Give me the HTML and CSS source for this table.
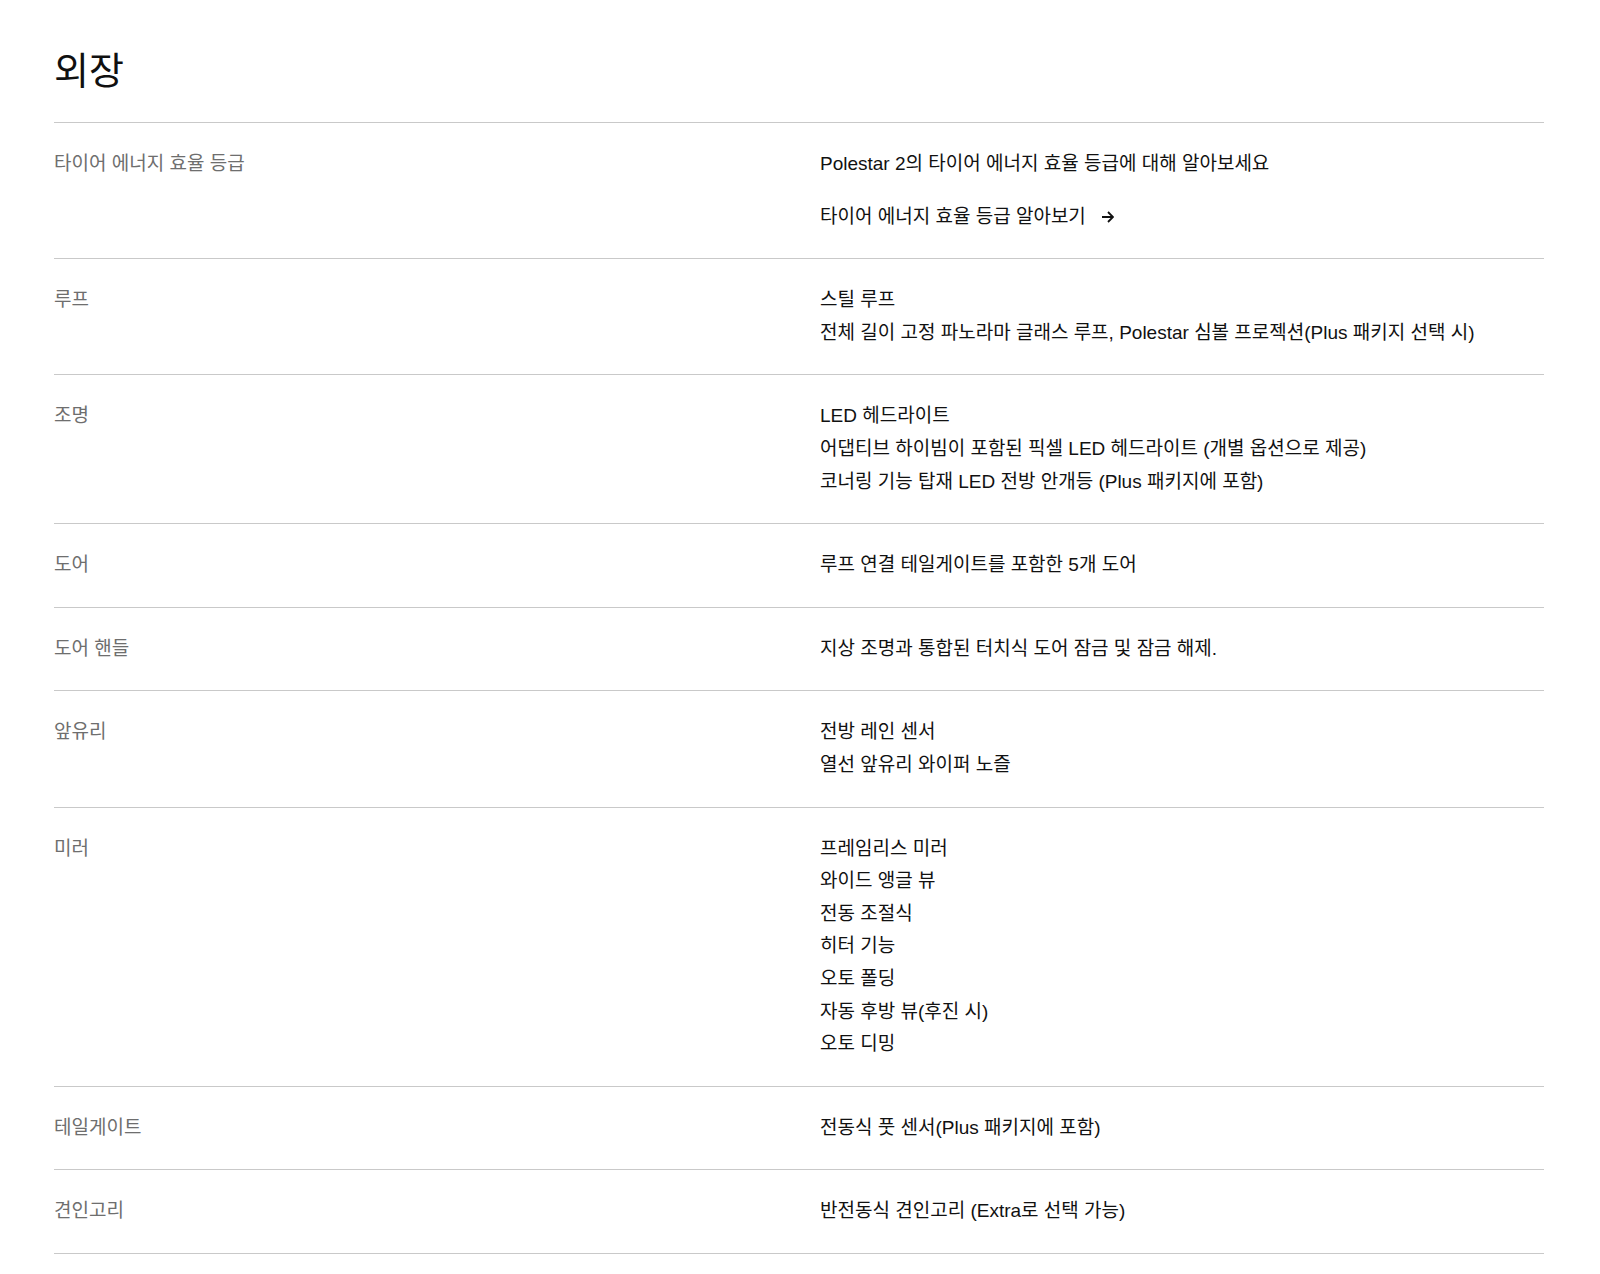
FILE: index.html
```html
<!DOCTYPE html>
<html lang="ko">

<head>
    <meta charset="UTF-8">
    <meta name="viewport" content="width=device-width, initial-scale=1.0">
    <title>외장</title>
    <link rel="stylesheet" href="styles.css">
</head>

<body>
    <section class="specs">
        <h1>외장</h1>

        <div class="spec-list">
            <div class="spec-row">
                <div class="spec-label">타이어 에너지 효율 등급</div>
                <div class="spec-value">
                    <p>Polestar 2의 타이어 에너지 효율 등급에 대해 알아보세요</p>
                    <a class="spec-link" href="#">타이어 에너지 효율 등급 알아보기
                        <svg width="12" height="12" viewBox="0 0 12 12" fill="none" stroke="currentColor" stroke-width="1.8">
                            <path d="M0 6h11M6 1l5 5-5 5" />
                        </svg>
                    </a>
                </div>
            </div>

            <div class="spec-row">
                <div class="spec-label">루프</div>
                <div class="spec-value">
                    <p>스틸 루프</p>
                    <p>전체 길이 고정 파노라마 글래스 루프, Polestar 심볼 프로젝션(Plus 패키지 선택 시)</p>
                </div>
            </div>

            <div class="spec-row">
                <div class="spec-label">조명</div>
                <div class="spec-value">
                    <p>LED 헤드라이트</p>
                    <p>어댑티브 하이빔이 포함된 픽셀 LED 헤드라이트 (개별 옵션으로 제공)</p>
                    <p>코너링 기능 탑재 LED 전방 안개등 (Plus 패키지에 포함)</p>
                </div>
            </div>

            <div class="spec-row">
                <div class="spec-label">도어</div>
                <div class="spec-value">
                    <p>루프 연결 테일게이트를 포함한 5개 도어</p>
                </div>
            </div>

            <div class="spec-row">
                <div class="spec-label">도어 핸들</div>
                <div class="spec-value">
                    <p>지상 조명과 통합된 터치식 도어 잠금 및 잠금 해제.</p>
                </div>
            </div>

            <div class="spec-row">
                <div class="spec-label">앞유리</div>
                <div class="spec-value">
                    <p>전방 레인 센서</p>
                    <p>열선 앞유리 와이퍼 노즐</p>
                </div>
            </div>

            <div class="spec-row">
                <div class="spec-label">미러</div>
                <div class="spec-value">
                    <p>프레임리스 미러</p>
                    <p>와이드 앵글 뷰</p>
                    <p>전동 조절식</p>
                    <p>히터 기능</p>
                    <p>오토 폴딩</p>
                    <p>자동 후방 뷰(후진 시)</p>
                    <p>오토 디밍</p>
                </div>
            </div>

            <div class="spec-row">
                <div class="spec-label">테일게이트</div>
                <div class="spec-value">
                    <p>전동식 풋 센서(Plus 패키지에 포함)</p>
                </div>
            </div>

            <div class="spec-row">
                <div class="spec-label">견인고리</div>
                <div class="spec-value">
                    <p>반전동식 견인고리 (Extra로 선택 가능)</p>
                </div>
            </div>
        </div>
    </section>
</body>

</html>
```

FILE: styles.css
```css
* {
    box-sizing: border-box;
    margin: 0;
    padding: 0;
}

body {
    background-color: #fff;
    color: #101010;
    font-family: "Liberation Sans", "Noto Sans CJK KR", sans-serif;
    font-size: 19px;
    line-height: 32.6px;
}

.specs {
    padding: 45px 56px 0 54px;
}

h1 {
    font-family: "Noto Sans CJK KR", sans-serif;
    font-size: 38px;
    font-weight: 400;
    line-height: 45px;
    margin-bottom: 32px;
}

.spec-list {
    border-top: 1px solid #c9c9c9;
}

.spec-row {
    display: grid;
    grid-template-columns: 1fr 1fr;
    column-gap: 42px;
    padding: 25px 0 25px;
    border-bottom: 1px solid #c9c9c9;
}

.spec-label {
    color: #6e6e6e;
}

.spec-value {
    color: #111;
}

.spec-link {
    display: inline-flex;
    align-items: center;
    gap: 16px;
    margin-top: 20px;
    color: #111;
    text-decoration: none;
}

.spec-link svg {
    flex-shrink: 0;
}
```
